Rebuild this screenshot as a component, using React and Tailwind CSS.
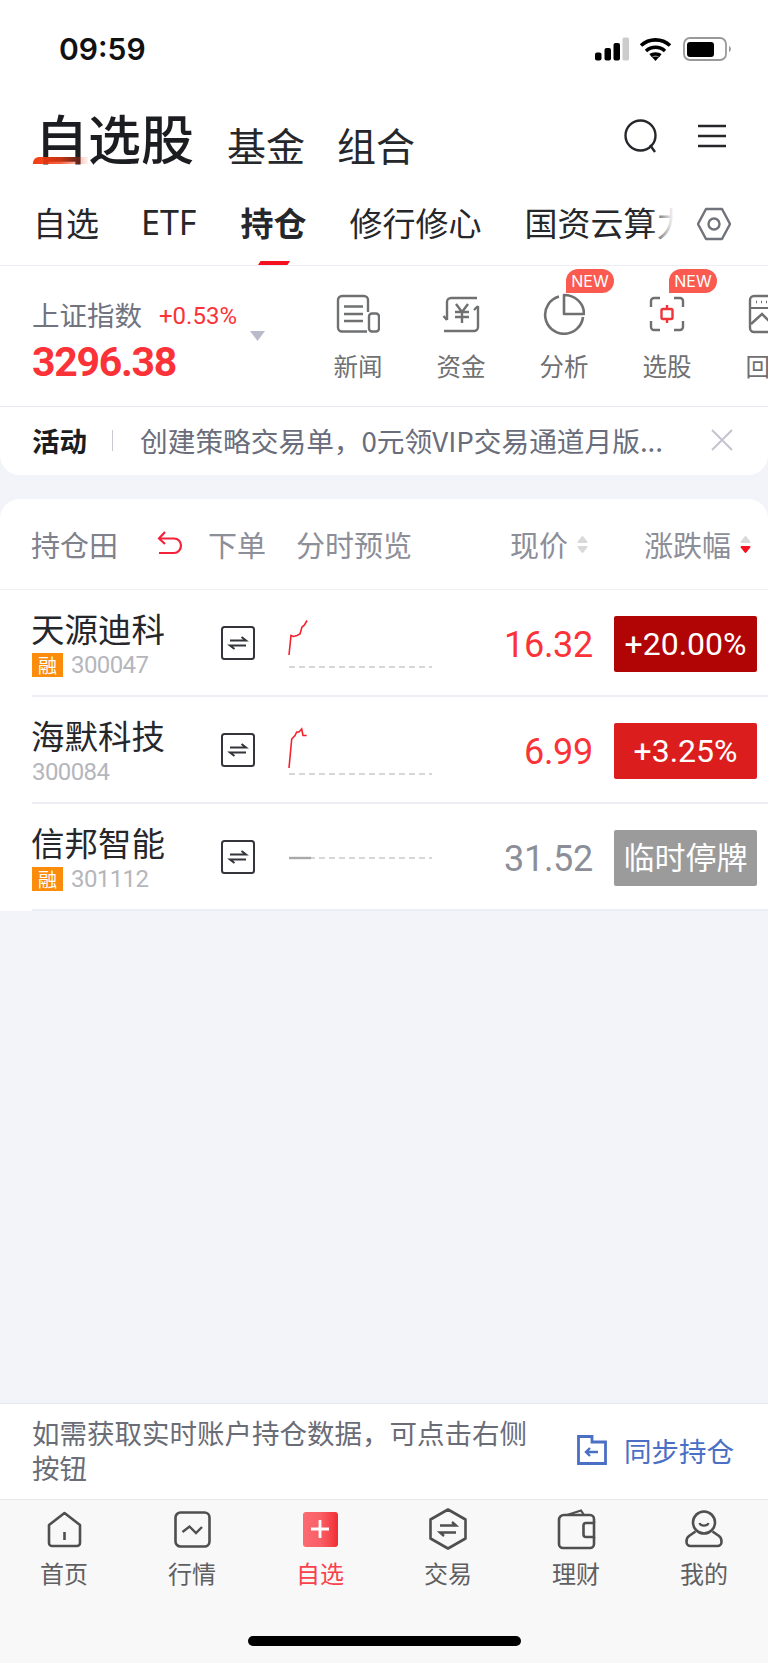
import React from 'react';

const S = ({ w, h, vb, children, className = '' }) => (
  <svg width={w} height={h} viewBox={vb || `0 0 ${w} ${h}`} fill="none" className={`block shrink-0 ${className}`}>{children}</svg>
);

const Swap = () => (
  <S w={34} h={34}>
    <rect x="1" y="1" width="32" height="32" rx="2.500" stroke="#33353b" strokeWidth="2" />
    <path d="M9 14.500H25L20.500 11" stroke="#33353b" strokeWidth="2" />
    <path d="M25 19.500H9L13.500 23" stroke="#33353b" strokeWidth="2" />
  </S>
);

const Spark = ({ d, dashY = 54, gray }) => (
  <S w={144} h={60}>
    <line x1="1" x2="144" y1={dashY} y2={dashY} stroke="#c9cacd" strokeWidth="1.400" strokeDasharray="6 4" />
    {gray ? <path d="M1 31H23" stroke="#a9a9a9" strokeWidth="2.400" /> : <path d={d} stroke="#f5222d" strokeWidth="1.600" />}
  </S>
);

const Rong = () => (
  <span className="flex h-[24px] w-[31px] items-center justify-center bg-[#fb8c0c] text-[19px] leading-none text-white">融</span>
);

const rows = [
  { name: '天源迪科', rong: true, code: '300047', price: '16.32', change: '+20.00%', size: 'text-[32px]', color: 'text-[#fb3338]', bg: 'bg-[#b10505]', d: 'M1 42L3 22.500L5.500 23.500L9 22.500L12 21L14 14L16 12.500L17 11L19 7.500' },
  { name: '海默科技', rong: false, code: '300084', price: '6.99', change: '+3.25%', size: 'text-[32px]', color: 'text-[#fb3338]', bg: 'bg-[#dc1d1d]', d: 'M1 48L3.700 19L7 15.500L8.700 12L11 12L13.700 9L15 15.500L18.700 15.500' },
  { name: '信邦智能', rong: true, code: '301112', price: '31.52', change: '临时停牌', size: 'text-[31px]', color: 'text-[#8c8e98]', bg: 'bg-[#9b9b9b]', gray: true },
];

const Sort = ({ active }) => (
  <S w={11} h={19} className="ml-[9px]">
    <path d="M5.500 2L9.500 7H1.500Z" fill="#d9d9d9" stroke="#d9d9d9" strokeWidth="2" strokeLinejoin="round" />
    <path d="M1.500 12H9.500L5.500 17Z" fill={active ? '#f5101f' : '#d9d9d9'} stroke={active ? '#f5101f' : '#d9d9d9'} strokeWidth="2" strokeLinejoin="round" />
  </S>
);

const G = '#6f7072';
const quick = [
  { label: '新闻', icon: (
    <S w={44} h={40}>
      <path d="M31 37.500H6a4 4 0 0 1-4-4V6a4 4 0 0 1 4-4h22a4 4 0 0 1 4 4v12" stroke={G} strokeWidth="2.400" />
      <path d="M8 12.500H27M8 20H27M8 27H27" stroke={G} strokeWidth="2.400" />
      <rect x="33" y="19.500" width="10" height="18" rx="3" stroke={G} strokeWidth="2.400" />
    </S>
  ) },
  { label: '资金', icon: (
    <S w={38} h={38}>
      <path d="M35 3H9A4 4 0 0 0 5 7V25" stroke={G} strokeWidth="2.400" />
      <path d="M5 25L1.500 21" stroke={G} strokeWidth="2.400" />
      <path d="M36 11V32a4 4 0 0 1-4 4H2" stroke={G} strokeWidth="2.400" />
      <path d="M36 11L32 15" stroke={G} strokeWidth="2.400" />
      <path d="M14 9L20 17L26 9M13 17H27M13 22H27M20 17V28" stroke={G} strokeWidth="2.400" />
    </S>
  ) },
  { label: '分析', icon: (
    <S w={42} h={42}>
      <path d="M16 3.500A19 19 0 1 0 40 24" stroke={G} strokeWidth="2.600" />
      <path d="M21 2C32 2 41 10 41 21H21Z" stroke={G} strokeWidth="2.600" strokeLinejoin="round" />
    </S>
  ), badge: true },
  { label: '选股', icon: (
    <S w={36} h={36}>
      <path d="M11 2H5a3 3 0 0 0-3 3v6M25 2h6a3 3 0 0 1 3 3v6M11 34H5a3 3 0 0 1-3-3v-6M25 34h6a3 3 0 0 0 3-3v-6" stroke={G} strokeWidth="2.400" />
      <rect x="12.500" y="13" width="11" height="10" rx="1.500" stroke="#f0343a" strokeWidth="2.400" />
      <path d="M18 9V13M18 23V27" stroke="#f0343a" strokeWidth="2.400" />
    </S>
  ), badge: true },
  { label: '回测', icon: (
    <S w={44} h={40}>
      <rect x="2" y="2" width="40" height="36" rx="4" stroke={G} strokeWidth="2.400" />
      <path d="M8 8H9M13 8H14M18 8H19" stroke={G} strokeWidth="2.400" />
      <path d="M2 14H42" stroke={G} strokeWidth="2" />
      <path d="M3 30L14 20L22 28" stroke={G} strokeWidth="2.400" />
    </S>
  ) },
];

const N = '#4f4f4f';
const nav = [
  { label: '首页', icon: (
    <S w={35} h={37}>
      <path d="M2 14L17.500 2L33 14V32a3 3 0 0 1-3 3H5a3 3 0 0 1-3-3Z" stroke={N} strokeWidth="2.600" strokeLinejoin="round" />
      <path d="M17.500 21V29" stroke={N} strokeWidth="2.600" />
    </S>
  ) },
  { label: '行情', icon: (
    <S w={37} h={37}>
      <rect x="1.500" y="1.500" width="34" height="34" rx="5" stroke={N} strokeWidth="2.600" />
      <path d="M8.500 21L15.500 15.500L22 22L28 16" stroke={N} strokeWidth="2.400" />
    </S>
  ) },
  { label: '自选', active: true, icon: (
    <div className="flex h-[35px] w-[35px] items-center justify-center rounded-[3px] bg-gradient-to-r from-[#fb6a72] via-[#fa5f66] to-[#f02a33]">
      <S w={18} h={18}><path d="M9 0V18M0 9H18" stroke="#fff" strokeWidth="2.800" /></S>
    </div>
  ) },
  { label: '交易', icon: (
    <S w={38} h={42}>
      <path d="M19 1.500L36.500 11.500V30.500L19 40.500L1.500 30.500V11.500Z" stroke={N} strokeWidth="2.600" strokeLinejoin="round" />
      <path d="M11 17.500H27L23 14" stroke={N} strokeWidth="2.400" />
      <path d="M27 24.500H11L15 28" stroke={N} strokeWidth="2.400" />
    </S>
  ) },
  { label: '理财', icon: (
    <S w={39} h={41}>
      <path d="M10 6L24 1.500L27 6" stroke={N} strokeWidth="2.200" />
      <path d="M37 14V10a4 4 0 0 0-4-4H7C4 6 2 8 2 11V35a4 4 0 0 0 4 4H33a4 4 0 0 0 4-4V28" stroke={N} strokeWidth="2.600" />
      <path d="M37 14H29a2.500 2.500 0 0 0-2.500 2.500V25.500a2.500 2.500 0 0 0 2.500 2.500H37Z" stroke={N} strokeWidth="2.600" />
    </S>
  ) },
  { label: '我的', icon: (
    <S w={38} h={38}>
      <circle cx="19" cy="12.500" r="11" stroke={N} strokeWidth="2.600" />
      <path d="M10.500 21.500L4 26C2 27.500 1.500 29 1.500 31.500V32a4 4 0 0 0 4 4H32.500a4 4 0 0 0 4-4V31.500c0-2.500-.5-4-2.500-5.500L27.500 21.500" stroke={N} strokeWidth="2.600" />
      <path d="M14.500 13c1 3.500 8 3.500 9 0" stroke={N} strokeWidth="2.200" />
    </S>
  ) },
];

export default function App() {
  return (
    <div className="flex h-[1663px] w-[768px] flex-col overflow-hidden bg-[#f2f4f9] font-['Noto_Sans_CJK_SC','Noto_Sans',sans-serif] text-[#26272b]">
      <header className="bg-white">
        {/* status bar */}
        <div className="flex h-[100px] items-start justify-between pl-[59px] pr-[36px] pt-[30px]">
          <span className="font-['Inter',sans-serif] text-[30px] font-semibold leading-[38px] text-[#111]">09:59</span>
          <div className="mt-[7px] flex items-center gap-[10px]">
            <S w={34} h={24}>
              <rect x="0" y="15.500" width="6.500" height="8" rx="2" fill="#000" />
              <rect x="9.500" y="11" width="6.500" height="12.500" rx="2" fill="#000" />
              <rect x="18.500" y="6" width="6.500" height="17.500" rx="2" fill="#000" />
              <rect x="27.500" y="0.500" width="6.500" height="23" rx="1.500" fill="#ccc" />
            </S>
            <S w={33} h={24}>
              <path d="M2 8.500C10 1 23 1 31 8.500M7 14C12.500 9 20.500 9 26 14M11.500 18.500C14 16.500 19 16.500 21.500 18.500" stroke="#000" strokeWidth="3.600" />
              <path d="M12.500 19.500L16.500 24L20.500 19.500Z" fill="#000" />
            </S>
            <S w={49} h={24} className="ml-[1px]">
              <rect x="1" y="1" width="42" height="22" rx="6" stroke="#999" strokeWidth="1.800" />
              <rect x="4" y="5" width="27" height="15" rx="3" fill="#000" />
              <path d="M46 9V15C48.500 14 48.500 10 46 9Z" fill="#999" />
            </S>
          </div>
        </div>
        {/* title row */}
        <div className="flex h-[87px] items-start pl-[35px] pr-[42px]">
          <div className="relative mt-[5px]">
            <span className="relative text-[53px] font-medium leading-[64px] text-[#1c1d21]">自选股</span>
            <span className="absolute bottom-[5px] left-[-2px] h-[7px] w-[55px] rounded-tl-[6px] bg-gradient-to-r from-[#f33a10] via-[#f33a10cc] to-[#f33a1010]" />
          </div>
          <span className="ml-[33px] mt-[17px] text-[39px] leading-[54px] text-[#26272b]">基金</span>
          <span className="ml-[32px] mt-[17px] text-[39px] leading-[54px] text-[#26272b]">组合</span>
          <div className="ml-auto mt-[19px] flex items-start gap-[39px]">
            <S w={35} h={36}>
              <circle cx="16.500" cy="16.500" r="15" stroke="#26272b" strokeWidth="2.400" />
              <path d="M26 26L31 33" stroke="#26272b" strokeWidth="2.400" />
            </S>
            <S w={28} h={24} className="mt-[5px]">
              <path d="M0 2H28M0 12H28M0 22H28" stroke="#26272b" strokeWidth="2.400" />
            </S>
          </div>
        </div>
        {/* tabs */}
        <div className="relative flex h-[79px] border-b border-[#eceef3]">
          <div className="flex w-[674px] items-start gap-[43px] overflow-hidden whitespace-nowrap pl-[33px] pt-[12px] text-[33px] leading-[46px]">
            <span>自选</span>
            <span className="-ml-[1px] font-['Noto_Sans',sans-serif] text-[34px]">ETF</span>
            <span className="ml-[1px] font-bold">持仓</span>
            <span>修行修心</span>
            <span>国资云算力</span>
          </div>
          <div className="absolute right-[94px] top-0 h-[60px] w-[26px] bg-gradient-to-r from-[#ffffff00] to-white" />
          <S w={34} h={34} className="ml-[23px] mt-[20px]">
            <path d="M9 2H25L33 17L25 32H9L1 17Z" stroke="#70727c" strokeWidth="2.400" strokeLinejoin="round" />
            <circle cx="17" cy="17" r="5.500" stroke="#70727c" strokeWidth="2.400" />
          </S>
          <span className="absolute bottom-0 left-[258px] h-[4px] w-[32px] bg-[#f5101f] [clip-path:polygon(8%_0,100%_0,92%_100%,0_100%)]" />
        </div>
      </header>

      {/* index + quick entries + activity */}
      <section className="rounded-b-[20px] bg-white">
        <div className="flex h-[141px] border-b border-[#e8eaf1]">
          <div className="relative w-[306px] shrink-0 pl-[32px] pt-[29px]">
            <div className="flex items-center">
              <span className="text-[27.500px] leading-[38px] text-[#71737f]">上证指数</span>
              <span className="ml-[17px] mt-[4px] font-['Roboto',sans-serif] text-[24px] leading-[32px] text-[#fb3338]">+0.53%</span>
            </div>
            <div className="mt-[5px] font-['Roboto',sans-serif] text-[41px] font-bold leading-[48px] tracking-[-1.300px] text-[#fb3338]">3296.38</div>
            <span className="absolute left-[250px] top-[65px] h-[10px] w-[15px] bg-[#b9bbc9] [clip-path:polygon(0_0,100%_0,50%_100%)]" />
          </div>
          <div className="flex overflow-hidden">
            {quick.map((q) => (
              <div key={q.label} className="relative flex w-[103px] shrink-0 flex-col items-center pt-[27px]">
                <div className="flex h-[42px] items-center justify-center">{q.icon}</div>
                <span className="mt-[14px] pl-[1px] text-[24.500px] leading-[34px] text-[#707072]">{q.label}</span>
                {q.badge && (
                  <span className="absolute left-[54px] top-[3px] flex h-[24px] w-[48px] items-center justify-center rounded-t-[12px] rounded-br-[12px] bg-[#fa5a50] font-['Inter',sans-serif] text-[16px] leading-none text-white">NEW</span>
                )}
              </div>
            ))}
          </div>
        </div>
        <div className="flex h-[68px] items-center pl-[32px] pr-[35px] pb-[2px]">
          <span className="text-[27.500px] font-bold leading-[38px] text-[#1c1d21]">活动</span>
          <span className="ml-[25px] h-[21px] w-px bg-[#c9cbd2]" />
          <span className="ml-[27px] whitespace-nowrap text-[27.700px] leading-[38px] text-[#6a6d7b]">创建策略交易单，0元领VIP交易通道月版...</span>
          <S w={22} h={22} className="ml-auto">
            <path d="M1 1L21 21M21 1L1 21" stroke="#c3c4d0" strokeWidth="2" />
          </S>
        </div>
      </section>

      {/* list */}
      <section className="mt-[24px] rounded-t-[20px] bg-white">
        <div className="flex h-[91px] items-center border-b border-[#eff0f4] pr-[17px] text-[29px] leading-[38px] text-[#8c8e98]">
          <span className="ml-[31px] w-[126px] text-[#7f818c]">持仓田</span>
          <S w={26} h={28}>
            <path d="M8 2L2 8.500L8 14" stroke="#f5203a" strokeWidth="2.200" />
            <path d="M2 8.500H17C21 8.500 24 11.500 24 15.500C24 19.500 21 23 17 23H2" stroke="#f5203a" strokeWidth="2.200" />
          </S>
          <span className="ml-[25px]">下单</span>
          <span className="ml-[30px]">分时预览</span>
          <span className="ml-auto">现价</span>
          <Sort />
          <span className="ml-[56px]">涨跌幅</span>
          <Sort active />
        </div>
        {rows.map((r) => (
          <div key={r.code} className="ml-[32px] flex h-[107px] items-center border-b-2 border-[#eeeff4] pr-[11px]">
            <div className="-mt-[2px] w-[189px] shrink-0">
              <div className="-ml-[1px] text-[33.500px] leading-[46px] text-[#26272b]">{r.name}</div>
              <div className="flex h-[27px] items-center">
                {r.rong && <Rong />}
                <span className={`font-['Roboto',sans-serif] text-[24px] leading-none tracking-[-0.600px] text-[#b5b6bc] ${r.rong ? 'ml-[8px]' : ''}`}>{r.code}</span>
              </div>
            </div>
            <Swap />
            <div className="ml-[33px]">
              <Spark d={r.d} gray={r.gray} dashY={r.gray ? 31 : 54} />
            </div>
            <span className={`ml-auto mt-[4px] font-['Roboto',sans-serif] text-[36px] leading-none tracking-[-0.300px] ${r.color}`}>{r.price}</span>
            <span className={`ml-[21px] mt-[3px] flex h-[56px] w-[143px] items-center justify-center rounded-[2px] font-['Roboto','Noto_Sans_CJK_SC',sans-serif] leading-none text-white ${r.size} ${r.bg}`}>{r.change}</span>
          </div>
        ))}
      </section>

      <div className="flex-1" />

      {/* sync bar */}
      <div className="flex h-[96px] items-center justify-between border-t border-[#e7e8ed] bg-white pb-[3px] pl-[32px] pr-[34px]">
        <p className="w-[510px] text-[27.500px] leading-[35px] text-[#6a6c76]">如需获取实时账户持仓数据，可点击右侧按钮</p>
        <div className="flex items-center gap-[17px]">
          <S w={30} h={30}>
            <path d="M1.500 1.500H15V7H28.500V28.500H1.500Z" stroke="#4a6fc4" strokeWidth="2.800" />
            <path d="M21 17H9M13 13L9 17L13 21" stroke="#4a6fc4" strokeWidth="2.400" />
          </S>
          <span className="text-[27.500px] leading-[38px] text-[#4a6fc4]">同步持仓</span>
        </div>
      </div>

      {/* tab bar */}
      <nav className="flex h-[164px] flex-col border-t border-[#e9e9e9] bg-[#f8f8f8]">
        <div className="grid grid-cols-6">
          {nav.map((n) => (
            <div key={n.label} className="flex flex-col items-center pt-[8px]">
              <div className="flex h-[42px] items-center justify-center">{n.icon}</div>
              <span className={`mt-[6px] text-[24px] leading-[34px] ${n.active ? 'text-[#f9414b]' : 'text-[#5f5f62]'}`}>{n.label}</span>
            </div>
          ))}
        </div>
        <div className="mx-auto mt-[46px] h-[10px] w-[273px] rounded-full bg-black" />
      </nav>
    </div>
  );
}
